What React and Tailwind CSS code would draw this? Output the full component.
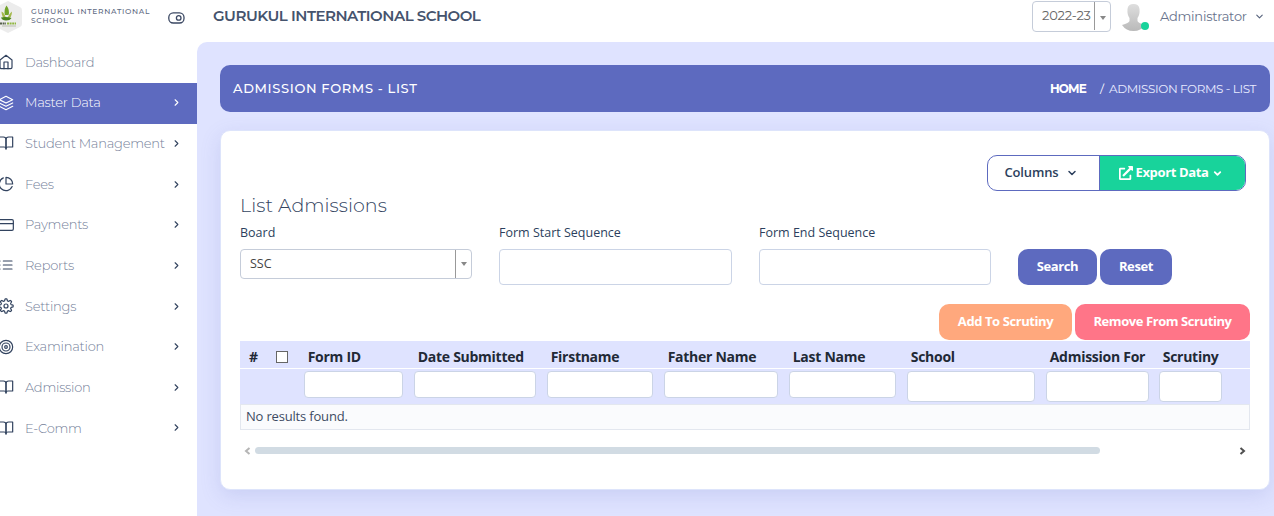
import { FiHome, FiLayers, FiBookOpen, FiPieChart, FiCreditCard, FiList, FiTarget, FiChevronRight, FiChevronDown } from "react-icons/fi";
import { FaExternalLinkAlt } from "react-icons/fa";

// Outline of an eight-toothed gear with rounded teeth
const gearPath = Array.from({ length: 96 }, (_, i) => {
  const a = (i / 96) * Math.PI * 2;
  const r = 9.3 + 1.5 * Math.tanh(2.2 * Math.cos(8 * a));
  return `${i ? "L" : "M"}${(12 + r * Math.cos(a)).toFixed(2)} ${(12 + r * Math.sin(a)).toFixed(2)}`;
}).join("") + "Z";

function Gear({ className }) {
  return (
    <svg width="16" height="16" viewBox="0 0 24 24" fill="none" stroke="currentColor" strokeWidth="1.8" strokeLinejoin="round" className={className}>
      <circle cx="12" cy="12" r="3" />
      <path d={gearPath} />
    </svg>
  );
}

const menu = [
  { label: "Dashboard", icon: FiHome, leaf: true },
  { label: "Master Data", icon: FiLayers, active: true },
  { label: "Student Management", icon: FiBookOpen },
  { label: "Fees", icon: FiPieChart },
  { label: "Payments", icon: FiCreditCard },
  { label: "Reports", icon: FiList },
  { label: "Settings", icon: Gear },
  { label: "Examination", icon: FiTarget },
  { label: "Admission", icon: FiBookOpen },
  { label: "E-Comm", icon: FiBookOpen },
];

const columns = [
  { label: "Form ID", size: "w-[99px] h-[27px]" },
  { label: "Date Submitted", size: "w-[122px] h-[27px]" },
  { label: "Firstname", size: "w-[106px] h-[27px]" },
  { label: "Father Name", size: "w-[114px] h-[27px]" },
  { label: "Last Name", size: "w-[107px] h-[27px]" },
  { label: "School", size: "w-[128px] h-[31px]" },
  { label: "Admission For", size: "w-[103px] h-[31px]" },
  { label: "Scrutiny", size: "w-[63px] h-[31px]" },
];

const gridCols = "grid grid-cols-[36px_28px_110px_133px_117px_125px_118px_139px_113px_91px]";
const montserrat = "font-[Montserrat,Inter,sans-serif]";

function Logo() {
  return (
    <svg width="22" height="32" viewBox="0 0 22 32" className="block shrink-0">
      <path d="M8 0 L20 6 Q22 7 22 9 V23 Q22 25 20 26 L8 32 L-6 25 V7 Z" fill="#ececec" />
      <path d="M6.5 4.5 Q10 9 8.5 14 H5 Q3.5 9 6.5 4.5Z" fill="#72a329" />
      <path d="M1.5 10.5 Q5 12 6 18 Q1.5 17 1.5 10.5Z M12 10.5 Q12 17 7.5 18 Q8.5 13 12 10.5Z" fill="#a4b94c" />
      <path d="M1 16.5 Q6 15.5 11.5 17 Q10 19.5 6 19.5 Q2 19.5 1 16.5Z" fill="#4c851f" />
      <path d="M0 22.5 H6" stroke="#55604a" strokeWidth="2.2" strokeDasharray="2 .6" />
      <path d="M7 22.5 H16" stroke="#8fb63f" strokeWidth="2.2" strokeDasharray="2 .6" />
      <path d="M2 25 H16" stroke="#b7bbae" strokeWidth="1" />
    </svg>
  );
}

function Avatar() {
  return (
    <div className="relative h-7 w-7">
      <svg width="28" height="28" viewBox="0 0 28 28" className="block">
        <defs>
          <linearGradient id="person" x1="0" x2="0" y1="0" y2="1">
            <stop offset="0" stopColor="#dedede" />
            <stop offset="1" stopColor="#b9b9b9" />
          </linearGradient>
        </defs>
        <path d="M6.5 6 Q7 1 12.5 1 Q18 1 18.5 6 Q19 12 16.5 15 V18 Q17 20 24 22 Q20 28 12.5 28 Q5 28 1 22 Q8 20 8.5 18 V15 Q6 12 6.5 6Z" fill="url(#person)" />
      </svg>
      <span className="absolute left-5 top-[19px] h-2 w-2 rounded-full bg-[#18d39b]" />
    </div>
  );
}

function Select({ value, className, caret }) {
  return (
    <div className={`flex overflow-hidden rounded-[4px] border border-[#c5ccd9] bg-white ${className}`}>
      <span className="flex flex-1 items-center whitespace-nowrap pl-[9px]">{value}</span>
      <span className={`flex w-4 items-center justify-center border-l border-[#999] ${caret}`}>
        <svg width="6" height="4" viewBox="0 0 6 4"><path d="M0 0H6L3 4Z" fill="#888" /></svg>
      </span>
    </div>
  );
}

export default function App() {
  return (
    <div className="flex h-[516px] w-[1274px] overflow-hidden bg-white font-['Open_Sans',sans-serif] text-[13px] text-[#2c3f5d]">
      <aside className="w-[197px] shrink-0">
        <div className="flex h-[42px] items-start pt-px">
          <Logo />
          <div className={`ml-[9px] mt-[6px] w-[137px] whitespace-nowrap text-[7.5px] font-medium leading-[9px] tracking-[0.7px] text-[#5f6b83] ${montserrat}`}>
            GURUKUL INTERNATIONAL<br />SCHOOL
          </div>
          <svg width="17" height="12" viewBox="0 0 17 12" className="mt-[11px]" fill="none" stroke="#3b4863" strokeWidth="1.3">
            <rect x=".8" y=".8" width="15.2" height="10.2" rx="4.5" />
            <circle cx="10.7" cy="5.9" r="2.3" />
          </svg>
        </div>
        <nav className="pt-[0.4px]">
          {menu.map(({ label, icon: Icon, active, leaf }) => (
            <div key={label} className={`flex h-[40.65px] items-center ${active ? "bg-[#5d6abf] text-white" : "text-[#76819a]"}`}>
              <Icon size={16} strokeWidth={1.8} className={`-ml-[2px] mb-px shrink-0 ${active ? "" : "text-[#32435f]"}`} />
              <span className={`ml-[11px] flex-1 whitespace-nowrap pb-[0.4px] text-[13px] font-light tracking-[-0.24px] ${montserrat}`}>{label}</span>
              {!leaf && <FiChevronRight size={11} strokeWidth={2.4} className={`mb-px mr-[15px] shrink-0 ${active ? "" : "text-[#32435f]"}`} />}
            </div>
          ))}
        </nav>
      </aside>

      <div className="flex min-w-0 flex-1 flex-col">
        <header className="flex h-[42px] shrink-0 items-start">
          <h1 className={`ml-4 mt-[6px] text-[15px] font-semibold leading-5 tracking-[-0.5px] text-[#45536d] ${montserrat}`}>GURUKUL INTERNATIONAL SCHOOL</h1>
          <Select value="2022-23" caret="pt-[3px]" className={`ml-auto mt-px h-[31px] w-[79px] pb-px text-[13px] tracking-[-0.2px] text-[#666] ${montserrat}`} />
          <div className="ml-[10px] mt-[3px]"><Avatar /></div>
          <span className={`ml-[11px] mt-[6px] w-[94px] whitespace-nowrap text-[13px] leading-5 tracking-[-0.25px] text-[#68738c] ${montserrat}`}>Administrator</span>
          <FiChevronDown size={11} strokeWidth={2.4} className="mr-[9px] mt-[11px] text-[#55617b]" />
        </header>

        <main className="flex-1 rounded-tl-[10px] bg-[#dfe3ff] pl-[23px] pt-[23px]">
          <div className={`flex h-[47px] w-[1050px] items-center justify-between rounded-[10px] bg-[#5d6abf] px-[13px] text-white ${montserrat}`}>
            <h2 className="text-[13px] font-medium tracking-[0.65px]">ADMISSION FORMS - LIST</h2>
            <div className="flex items-center whitespace-nowrap pr-px pt-px text-[12px]">
              <b className="mr-[14px] tracking-[-0.8px]">HOME</b>
              <span className="mr-[5px]">/</span>
              <span className="tracking-[-0.4px] text-[#e8eaff]">ADMISSION FORMS - LIST</span>
            </div>
          </div>

          <section className="mt-[18px] h-[360px] w-[1050px] rounded-[10px] border border-[#dde4fb] bg-white pl-[19px] pr-[19px] pt-6 shadow-[0_6px_20px_rgba(94,107,190,0.17)]">
            <div className="flex h-9 justify-end pr-[4px]">
              <div className="flex overflow-hidden rounded-[10px] border border-[#5d6abf] font-semibold">
                <button className="flex w-[111px] items-center justify-center gap-[7px] pr-[5px] tracking-[-0.15px]">Columns <FiChevronDown size={12} strokeWidth={3} /></button>
                <button className="flex w-[146px] items-center justify-center border-l border-[#5d6abf] bg-[#18d39b] pr-[3px] font-bold tracking-[-0.37px] text-white">
                  <FaExternalLinkAlt size={14} className="mr-[3px]" />Export Data<FiChevronDown size={11} strokeWidth={4} className="ml-1" />
                </button>
              </div>
            </div>

            <h3 className={`mt-[3px] text-[19px] font-light leading-6 tracking-[0.08px] text-[#33445f] ${montserrat}`}>List Admissions</h3>
            <div className="mt-[5px] flex h-[62px] text-[12.5px]">
              <div className="w-[259px]">
                <div className="h-[26px] leading-[20px]">Board</div>
                <Select value="SSC" caret="" className="h-[30px] w-[232px] text-[#444]" />
              </div>
              <div className="w-[260px]">
                <div className="h-[26px] leading-[20px]">Form Start Sequence</div>
                <div className="h-9 w-[233px] rounded-[4px] border border-[#cbd4e6]" />
              </div>
              <div className="w-[259px]">
                <div className="h-[26px] leading-[20px]">Form End Sequence</div>
                <div className="h-9 w-[232px] rounded-[4px] border border-[#cbd4e6]" />
              </div>
              <div className="flex gap-[3px] pt-[26px] text-[13px] font-bold tracking-[-0.38px] text-white">
                <button className="h-9 w-[79px] rounded-[10px] bg-[#5d6abf]">Search</button>
                <button className="h-9 w-[72px] rounded-[10px] bg-[#5d6abf]">Reset</button>
              </div>
            </div>

            <div className="mt-[19px] flex justify-end gap-[3px] font-bold tracking-[-0.42px] text-white">
              <button className="h-9 w-[133px] rounded-[10px] bg-[#ffa87d]">Add To Scrutiny</button>
              <button className="h-9 w-[175px] rounded-[10px] bg-[#ff7588]">Remove From Scrutiny</button>
            </div>

            <div className="mt-px w-[1010px]">
              <div className={`${gridCols} h-7 items-center border-b border-white bg-[#dfe3ff] pt-1 text-[14px] font-bold tracking-[-0.27px] text-[#222936]`}>
                <span className="pl-[9px]">#</span>
                <span className="mt-px h-3 w-3 border border-[#666] bg-white" />
                {columns.map((c) => <span key={c.label} className="whitespace-nowrap pl-[3.7px]">{c.label}</span>)}
              </div>
              <div className={`${gridCols} h-[35px] bg-[#dfe3ff] pt-[2px]`}>
                <span /><span />
                {columns.map((c) => <span key={c.label} className={`rounded-[4px] border border-[#cbd4e6] bg-white ${c.size}`} />)}
              </div>
              <div className="flex h-[26px] items-center border border-[#e3e7ef] bg-[#fafbfd] pl-[5px] text-[13px] tracking-[-0.18px] text-[#3d4b63]">No results found.</div>
            </div>

            <div className="mt-[16px] flex h-[9px] w-[1010px] items-center">
              <svg width="7" height="8" viewBox="0 0 7 8" className="ml-1" fill="none" stroke="#b5b5b5" strokeWidth="2"><path d="M5.5 1L2 4L5.5 7" /></svg>
              <div className="ml-1 h-[7px] w-[845px] rounded-full bg-[#d1dbe3]" />
              <svg width="7" height="8" viewBox="0 0 7 8" className="ml-auto mr-[4px]" fill="none" stroke="#505050" strokeWidth="2"><path d="M1.5 1L5 4L1.5 7" /></svg>
            </div>
          </section>
        </main>
      </div>
    </div>
  );
}
